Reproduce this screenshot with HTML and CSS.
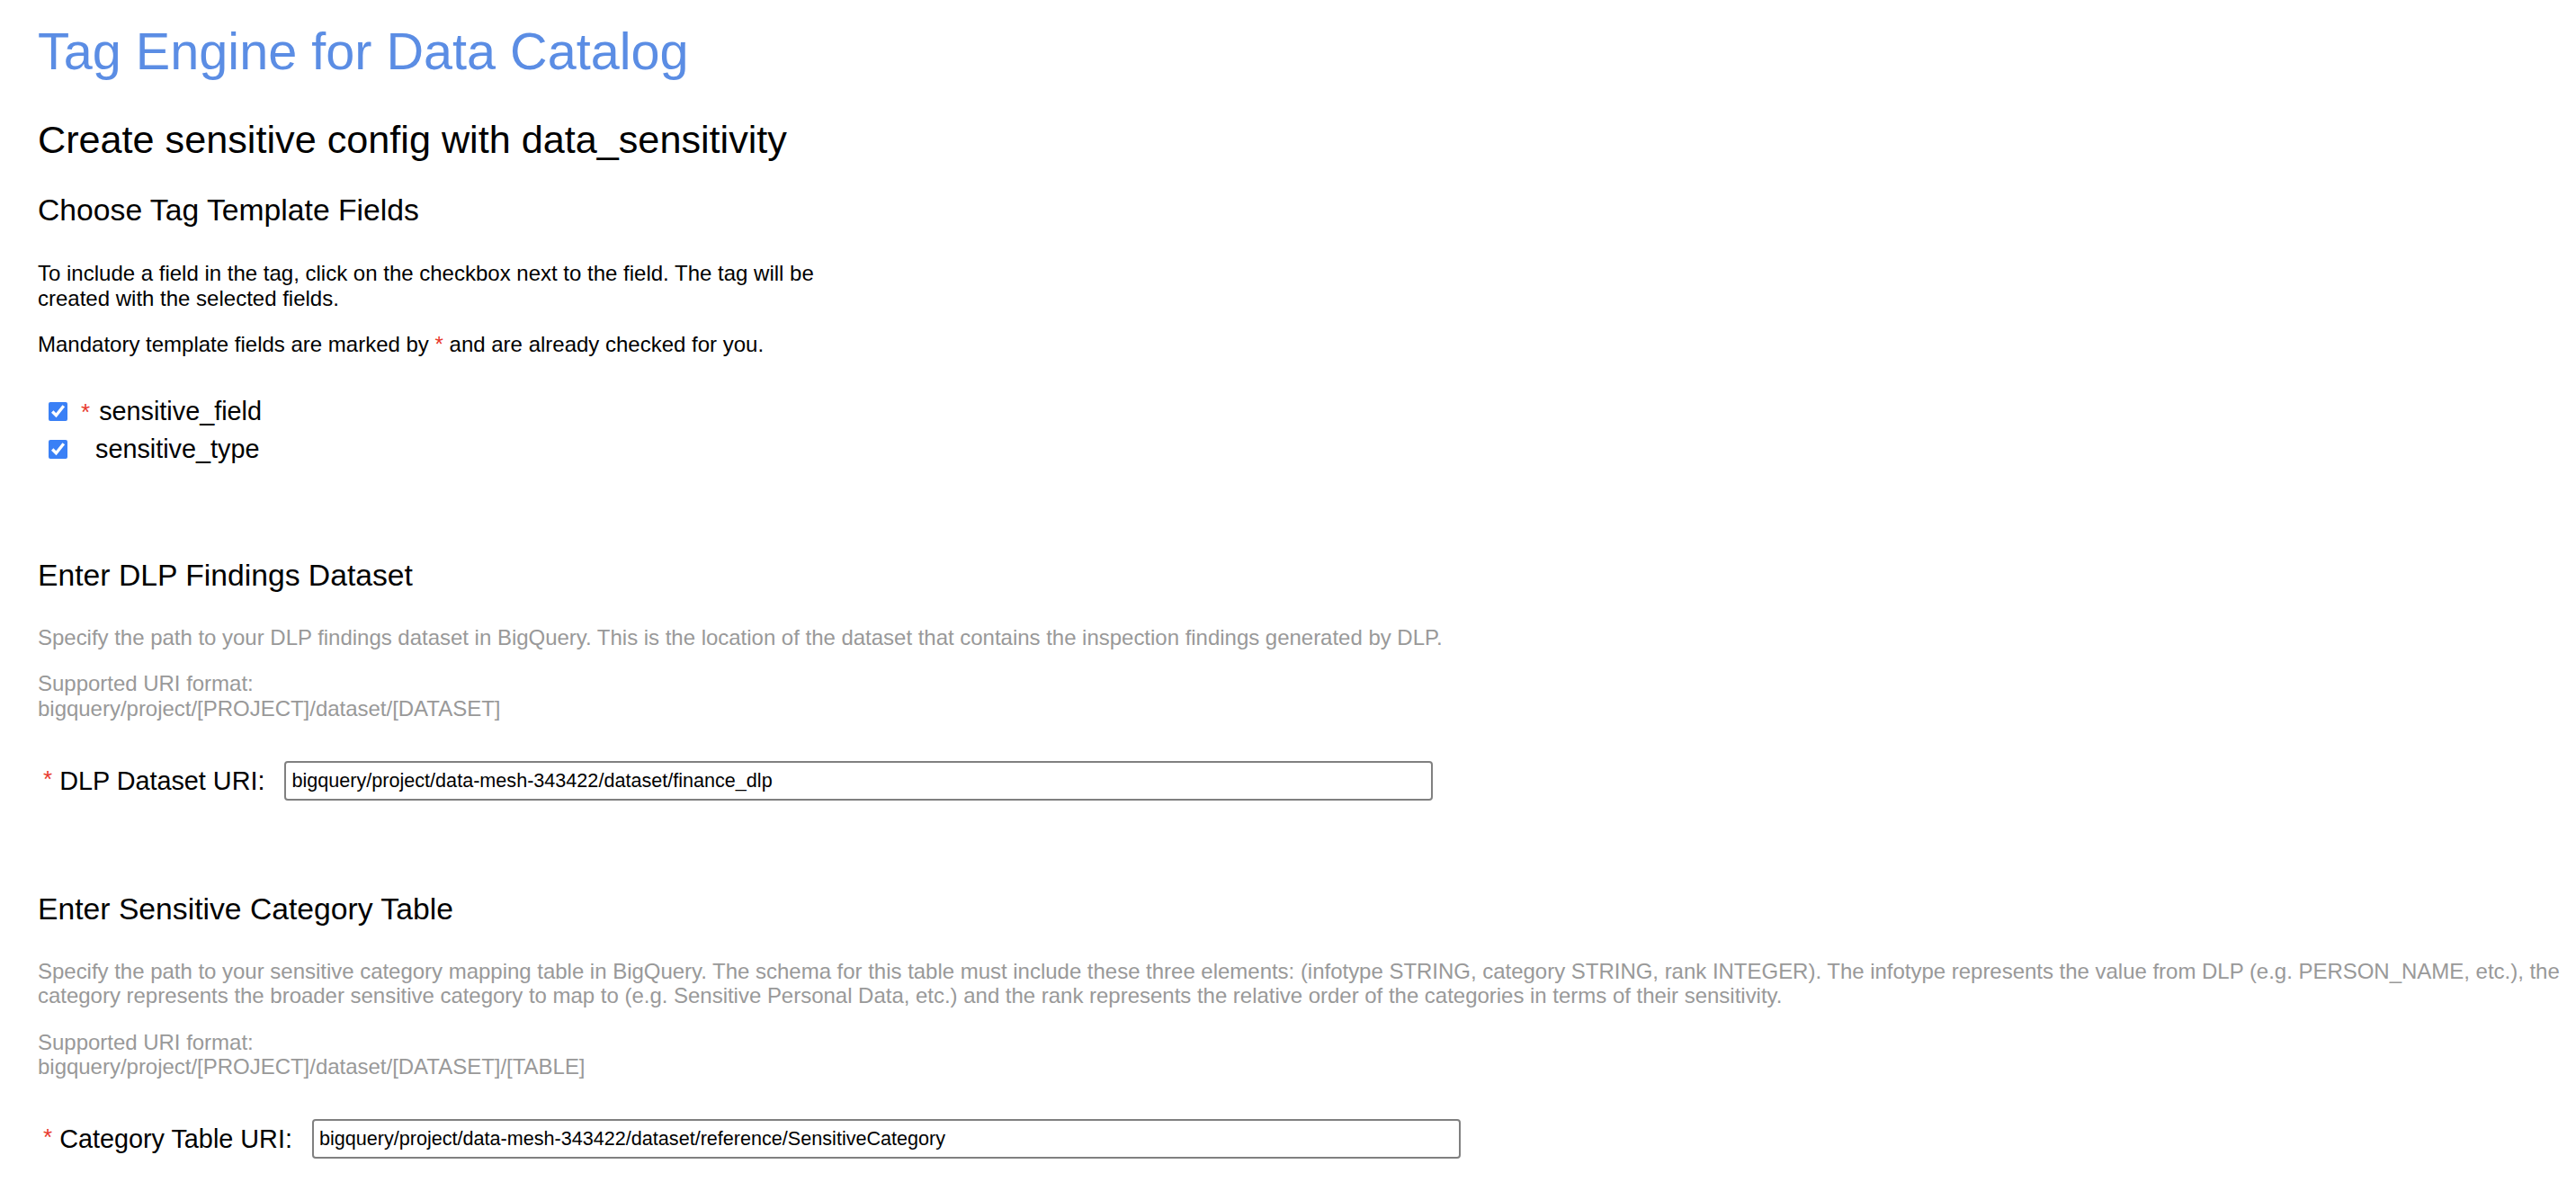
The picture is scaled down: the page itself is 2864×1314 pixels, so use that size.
FILE: index.html
```html
<!DOCTYPE html>
<html lang="en">
<head>
<meta charset="utf-8">
<title>Tag Engine for Data Catalog</title>
<link rel="stylesheet" href="styles.css">
</head>
<body>
<div class="page">
  <h1 class="app-title">Tag Engine for Data Catalog</h1>
  <h2 class="page-title">Create sensitive config with data_sensitivity</h2>

  <h3 class="section-title">Choose Tag Template Fields</h3>
  <div class="intro">
    <p class="text">To include a field in the tag, click on the checkbox next to the field. The tag will be created with the selected fields.</p>
    <p class="text">Mandatory template fields are marked by <span class="req">*</span> and are already checked for you.</p>
  </div>

  <div class="fields">
    <div class="field-row">
      <input class="check" type="checkbox" checked>
      <span class="req req-field">*</span>
      <span class="field-name">sensitive_field</span>
    </div>
    <div class="field-row">
      <input class="check check-plain" type="checkbox" checked>
      <span class="field-name">sensitive_type</span>
    </div>
  </div>

  <h3 class="section-title section-gap">Enter DLP Findings Dataset</h3>
  <p class="text muted first">Specify the path to your DLP findings dataset in BigQuery. This is the location of the dataset that contains the inspection findings generated by DLP.</p>
  <p class="text muted">Supported URI format:<br>bigquery/project/[PROJECT]/dataset/[DATASET]</p>
  <div class="uri-row">
    <label class="uri-label"><span class="req">*</span> DLP Dataset URI:</label>
    <input class="uri-input" type="text" value="bigquery/project/data-mesh-343422/dataset/finance_dlp">
  </div>

  <h3 class="section-title section-gap2">Enter Sensitive Category Table</h3>
  <p class="text muted first">Specify the path to your sensitive category mapping table in BigQuery. The schema for this table must include these three elements: (infotype STRING, category STRING, rank INTEGER). The infotype represents the value from DLP (e.g. PERSON_NAME, etc.), the category represents the broader sensitive category to map to (e.g. Sensitive Personal Data, etc.) and the rank represents the relative order of the categories in terms of their sensitivity.</p>
  <p class="text muted">Supported URI format:<br>bigquery/project/[PROJECT]/dataset/[DATASET]/[TABLE]</p>
  <div class="uri-row">
    <label class="uri-label"><span class="req">*</span> Category Table URI:</label>
    <input class="uri-input" type="text" value="bigquery/project/data-mesh-343422/dataset/reference/SensitiveCategory">
  </div>
</div>
</body>
</html>
```
FILE: styles.css
```css
html, body {
  margin: 0;
  padding: 0;
  background: #ffffff;
}

body {
  font-family: "Liberation Sans", Arial, Helvetica, sans-serif;
  color: #000000;
}

.page {
  padding: 24px 0 60px 42px;
}

.app-title {
  margin: 0;
  font-size: 57.6px;
  line-height: 66px;
  font-weight: normal;
  color: #5b8de4;
}

.page-title {
  margin: 40px 0 0;
  font-size: 43.2px;
  line-height: 50px;
  font-weight: normal;
}

.section-title {
  margin: 34px 0 0;
  font-size: 33.7px;
  line-height: 39px;
  font-weight: normal;
}

.section-gap {
  margin-top: 99px;
}

.section-gap2 {
  margin-top: 101px;
}

.intro {
  width: 900px;
  margin-top: 37px;
}

.text {
  margin: 24px 0 0;
  font-size: 24px;
  line-height: 27.6px;
}

.intro .text:first-child {
  margin-top: 0;
}

.muted {
  color: #999999;
  letter-spacing: -0.02px;
}

.muted.first {
  margin-top: 36px;
}

.req {
  color: #e8392d;
}

.fields {
  margin-top: 40px;
}

.field-row {
  display: flex;
  align-items: center;
  height: 42px;
  padding-left: 12px;
}

.check {
  width: 21px;
  height: 21px;
  margin: 0 15px 0 0;
  accent-color: #3a80f6;
}

.check-plain {
  margin-right: 31px;
}

.req-field {
  font-size: 26px;
  align-self: flex-start;
  margin-top: 6px;
  margin-right: 10px;
}

.field-name {
  font-size: 28.8px;
}

.uri-row {
  display: flex;
  align-items: center;
  gap: 22px;
  margin-top: 44px;
  height: 44px;
}

.uri-label {
  font-size: 28.8px;
  padding-left: 6px;
}

.uri-label .req {
  font-size: 26px;
  vertical-align: 3px;
}

.uri-input {
  box-sizing: border-box;
  width: 1277px;
  height: 44px;
  margin: 0;
  padding: 0 6px;
  border: 2px solid #808080;
  border-radius: 4px;
  font-family: "Liberation Sans", Arial, Helvetica, sans-serif;
  font-size: 21.6px;
  color: #000000;
  background: #ffffff;
}
```
